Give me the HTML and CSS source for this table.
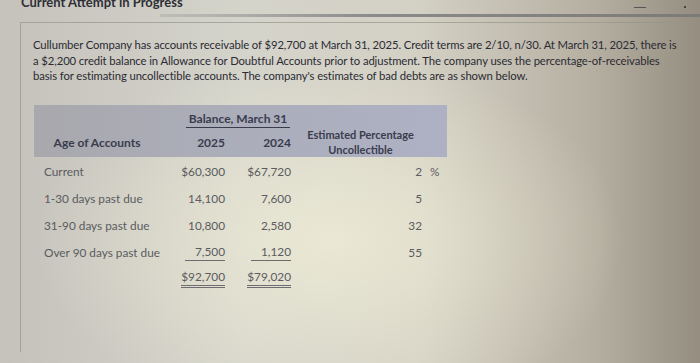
FILE: index.html
```html
<!DOCTYPE html>
<html>
<head>
<meta charset="utf-8">
<link rel="stylesheet" href="styles.css">
</head>
<body>
<div class="screen">
  <div class="topbar">
    <h1 class="attempt">Current Attempt in Progress</h1>
    <div class="tools"><span class="tool-dash"></span><span class="tool-dot"></span></div>
  </div>
  <div class="rule"></div>
  <div class="card">
    <p class="question">Cullumber Company has accounts receivable of $92,700 at March 31, 2025. Credit terms are 2/10, n/30. At March 31, 2025, there is<br>a $2,200 credit balance in Allowance for Doubtful Accounts prior to adjustment. The company uses the percentage-of-receivables<br>basis for estimating uncollectible accounts. The company's estimates of bad debts are as shown below.</p>
    <table class="aging">
      <colgroup>
        <col class="c-age"><col class="c-y1"><col class="c-y2"><col class="c-pct">
      </colgroup>
      <thead>
        <tr class="h1row">
          <th></th>
          <th colspan="2" class="bal"><span>Balance, March 31</span></th>
          <th rowspan="2" class="est">Estimated Percentage<br>Uncollectible</th>
        </tr>
        <tr class="h2row">
          <th class="age-h">Age of Accounts</th>
          <th class="yr">2025</th>
          <th class="yr">2024</th>
        </tr>
      </thead>
      <tbody>
        <tr><td>Current</td><td class="num">$60,300</td><td class="num">$67,720</td><td class="pct"><span class="pv">2</span><span class="ps">%</span></td></tr>
        <tr><td>1-30 days past due</td><td class="num">14,100</td><td class="num">7,600</td><td class="pct"><span class="pv">5</span><span class="ps"></span></td></tr>
        <tr><td>31-90 days past due</td><td class="num">10,800</td><td class="num">2,580</td><td class="pct"><span class="pv">32</span><span class="ps"></span></td></tr>
        <tr><td>Over 90 days past due</td><td class="num"><span class="single">7,500</span></td><td class="num"><span class="single">1,120</span></td><td class="pct"><span class="pv">55</span><span class="ps"></span></td></tr>
        <tr class="total"><td></td><td class="num"><span class="double">$92,700</span></td><td class="num"><span class="double">$79,020</span></td><td></td></tr>
      </tbody>
    </table>
  </div>
</div>
</body>
</html>
```

FILE: styles.css
```css
html, body {
  margin: 0;
  padding: 0;
}
body {
  width: 700px;
  height: 363px;
  overflow: hidden;
  font-family: Lato, "Open Sans", sans-serif;
  background:
    radial-gradient(ellipse 420px 260px at 330px 240px, rgba(238,236,214,0.85), rgba(238,236,214,0) 70%),
    linear-gradient(90deg, #c4c2bb 0%, #d5d4cb 35%, #d3d0c4 60%, #b5af a1 85%, #958e80 100%);
  background:
    radial-gradient(ellipse 420px 260px at 330px 240px, rgba(238,236,214,0.85), rgba(238,236,214,0) 70%),
    linear-gradient(90deg, #c4c2bb 0%, #d5d4cb 35%, #d3d0c4 60%, #b5afa1 85%, #958e80 100%);
}
.screen {
  width: 700px;
  height: 363px;
  position: relative;
}
.topbar {
  height: 14px;
  display: flex;
  align-items: flex-end;
  justify-content: space-between;
  padding: 0 14px 0 21px;
}
.attempt {
  margin: 0 0 5px 0;
  font-size: 13px;
  font-weight: 700;
  color: #2e2e36;
  line-height: 13px;
}
.tools {
  display: flex;
  align-items: center;
  gap: 38px;
  margin-bottom: 6px;
}
.tool-dash {
  width: 12px;
  height: 1px;
  background: #555;
}
.tool-dot {
  width: 2px;
  height: 2px;
  background: #444;
}
.rule {
  height: 3px;
  margin-left: 160px;
  background: linear-gradient(90deg, rgba(120,120,125,0.2), #8a8a8c 40%, #7c7a78);
}
.card {
  margin: 5px 8px 0 20px;
  border: 1px solid rgba(150,148,140,0.7);
  border-bottom: none;
  padding: 14px 0 0 12px;
  height: 330px;
  box-sizing: border-box;
}
.question {
  margin: 0;
  font-size: 11.3px;
  line-height: 15.5px;
  color: #2b2b33;
  white-space: nowrap;
  letter-spacing: -0.1px;
}
.aging {
  margin-top: 21px;
  margin-left: 1px;
  border-collapse: collapse;
  table-layout: fixed;
  font-size: 11.8px;
  color: #5b5b60;
}
.c-age { width: 136px; }
.c-y1 { width: 60px; }
.c-y2 { width: 66px; }
.c-pct { width: 151px; }
.aging thead {
  background: linear-gradient(90deg, #a8a8ad 0%, #abadb9 45%, #aeb1c4 100%);
}
.aging th {
  font-weight: 700;
  color: #3a3c4e;
  padding: 0;
  font-size: 12px;
}
.h1row th {
  height: 23px;
  vertical-align: bottom;
}
.bal span {
  display: inline-block;
  border-bottom: 1px solid #3a3c4e;
  padding: 0 3px 2px 3px;
  margin-left: 10px;
  line-height: 13px;
}
.h2row th {
  height: 29px;
}
.age-h {
  text-align: center;
  padding-right: 10px !important;
}
.yr {
  text-align: right;
  padding-right: 5px !important;
}
.est {
  text-align: center;
  line-height: 15px;
  padding-top: 6px !important;
  padding-right: 22px !important;
  font-size: 11px !important;
}
.aging td {
  height: 27px;
  padding: 0;
  vertical-align: middle;
}
.aging tbody tr:first-child td {
  padding-top: 1px;
}
.aging tbody td:first-child {
  padding-left: 10px;
}
.num {
  text-align: right;
  padding-right: 5px !important;
}
.pct {
  display: flex;
  align-items: center;
  height: 27px;
}
.pv {
  width: 126px;
  text-align: right;
}
.ps {
  margin-left: 8px;
}
.single {
  display: inline-block;
  border-bottom: 1px solid #6c6c72;
  padding-left: 10px;
  line-height: 14px;
  padding-bottom: 1px;
}
.double {
  display: inline-block;
  border-bottom: 3px double #6c6c72;
  line-height: 14px;
  padding-bottom: 1px;
}
.total td {
  height: 26px;
  vertical-align: middle;
}
```
